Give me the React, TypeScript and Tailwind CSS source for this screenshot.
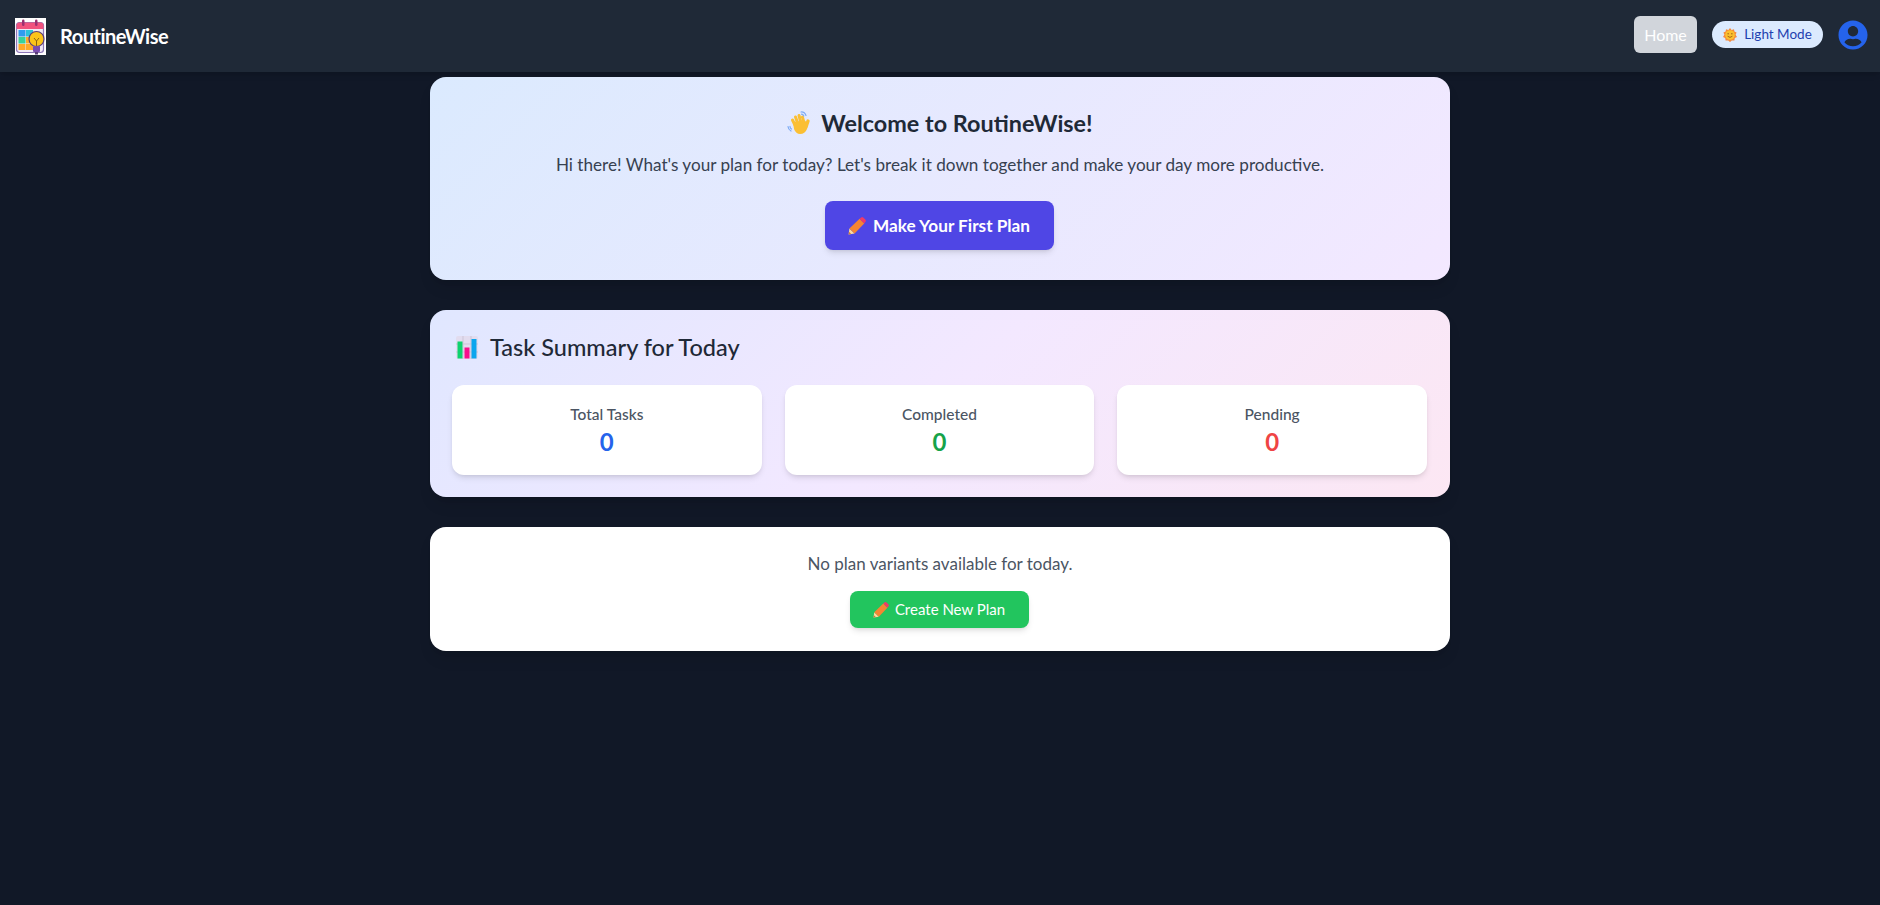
import { FaUserCircle } from 'react-icons/fa'

function PencilIcon({ size = 18 }: { size?: number }) {
  return (
    <svg width={size} height={size} viewBox="0 0 18 18" className="shrink-0">
      <path d="M0.6 17.4 L1.4 11.4 L6.6 16.6 Z" fill="#fcd9a0" />
      <path d="M0.6 17.4 L1 14.8 L3.2 17 Z" fill="#c97a3a" />
      <path d="M1.4 11.4 L11.6 1.8 L16.2 6.4 L6.6 16.6 Z" fill="#f58532" />
      <path d="M11.6 1.8 L13.2 0.4 Q14.2 -0.2 15.2 0.5 L17.5 2.8 Q18.2 3.8 17.5 4.8 L16.2 6.4 Z" fill="#ef3a68" />
    </svg>
  )
}

function WaveIcon() {
  return (
    <svg width="24" height="24" viewBox="0 0 24 24" className="shrink-0">
      <g fill="none" stroke="#fbbf33" strokeLinecap="round">
        <path d="M8 14 L5.5 9" strokeWidth="3" />
        <path d="M11 13 L8.5 6" strokeWidth="3" />
        <path d="M14 12 L12 4.5" strokeWidth="3" />
        <path d="M17 12 L15.5 6" strokeWidth="3" />
        <path d="M19 16 L21 10" strokeWidth="3.4" />
      </g>
      <path d="M6 11 L18 9.5 L20.5 13 L20 18 Q18 23 13 23 Q9 23 7 18 Z" fill="#fbbf33" />
      <path d="M14 1 Q17.5 0.6 19 4.5 M14.5 3.2 Q16 3.2 16.8 5 M1 15.5 Q1.2 18.5 4 20 M3 15.4 Q3 17 4.5 18" stroke="#7cabf5" strokeWidth="1.2" fill="none" strokeLinecap="round" />
    </svg>
  )
}

function ChartIcon() {
  return (
    <svg width="24" height="24" viewBox="0 0 24 24" className="shrink-0">
      <rect x="1" y="1" width="22" height="23" rx="2" fill="#e2dcef" />
      <path d="M8 1 V24 M16 1 V24 M1 9 H23 M1 17 H23" stroke="#cbc5d8" strokeWidth="1" />
      <rect x="2.5" y="6.5" width="5" height="17" fill="#0ed26f" />
      <rect x="9.5" y="12.5" width="5" height="11" fill="#f70f8c" />
      <rect x="16.5" y="4" width="5" height="19.5" fill="#0ba6ee" />
    </svg>
  )
}

function SunIcon() {
  return (
    <svg width="14" height="14" viewBox="0 0 14 14" className="shrink-0">
      <path d="M7 0 L8.6 2 L11 1.2 L11.4 3.6 L13.6 4.4 L12.6 6.8 L14 9 L11.8 10 L11.4 12.6 L8.8 12.4 L7 14 L5.2 12.4 L2.6 12.6 L2.2 10 L0 9 L1.4 6.8 L0.4 4.4 L2.6 3.6 L3 1.2 L5.4 2 Z" fill="#f58a3c" />
      <circle cx="7" cy="7" r="4.8" fill="#fbc02d" />
      <path d="M4.4 5.8 H6 M8 5.8 H9.6" stroke="#a5651a" strokeWidth="1" />
      <path d="M4.6 8.2 Q7 10.6 9.4 8.2" stroke="#a5651a" strokeWidth="1" fill="none" />
    </svg>
  )
}

function Logo() {
  return (
    <svg width="31" height="37" viewBox="0 0 31 37" className="shrink-0">
      <rect width="31" height="37" fill="#ffffff" />
      <rect x="1.5" y="4.5" width="27" height="30" rx="3" fill="#f1e9f5" stroke="#8d76b8" strokeWidth="1.2" />
      <path d="M1.5 11 V7.5 Q1.5 4.5 4.5 4.5 H25.5 Q28.5 4.5 28.5 7.5 V11 Z" fill="#f0527e" />
      <rect x="7" y="1.5" width="2.5" height="6.5" rx="1.2" fill="#9a2f6f" />
      <rect x="20" y="1.5" width="2.5" height="6.5" rx="1.2" fill="#9a2f6f" />
      <rect x="3.5" y="12" width="7" height="6.5" fill="#2f9bf0" />
      <rect x="11" y="12" width="7" height="6.5" fill="#2cc1d8" />
      <rect x="3.5" y="19" width="7" height="6.5" fill="#37d39a" />
      <rect x="11" y="19" width="7" height="6.5" fill="#ffa928" />
      <rect x="3.5" y="26" width="7" height="6" fill="#ffa928" />
      <rect x="11" y="26" width="7" height="6" fill="#ffa928" />
      <circle cx="21.5" cy="21" r="7.5" fill="#fcc419" stroke="#5a3d78" strokeWidth="1.2" />
      <path d="M19 20 L21.5 23 L24 20 M21.5 23 V28" stroke="#8a6212" strokeWidth="1" fill="none" />
      <rect x="18" y="28" width="7" height="6" rx="1" fill="#7b4cb0" />
      <rect x="20" y="34" width="3" height="2.5" fill="#5a3d78" />
    </svg>
  )
}

function StatCard({ label, color }: { label: string; color: string }) {
  return (
    <div className="flex h-[90px] flex-col items-center justify-center rounded-xl bg-white shadow-md">
      <p className="text-[15.5px] leading-6 font-medium text-[#4b5563]">{label}</p>
      <p className={`text-[24px] leading-8 font-bold ${color}`}>0</p>
    </div>
  )
}

export default function App() {
  return (
    <div className="min-h-[905px] bg-[#111827] font-['Lato',sans-serif]">
      <nav className="flex h-[72px] items-center justify-between bg-[#1f2937] pr-[12px] pl-[15px] shadow-md">
        <div className="flex items-center gap-[14px]">
          <Logo />
          <span className="text-[20px] font-bold tracking-[-0.5px] text-white">RoutineWise</span>
        </div>
        <div className="-mt-[3px] flex items-center">
          <button className="flex h-[37px] w-[63px] items-center justify-center rounded-md bg-[#d1d5db] text-[16px] text-white">Home</button>
          <button className="ml-[15px] flex h-[27px] w-[111px] items-center justify-center gap-[7px] rounded-full bg-[#dbeafe] text-[13.5px] text-[#1e40af]">
            <SunIcon />
            Light Mode
          </button>
          <FaUserCircle className="ml-[15px] text-[#2563eb]" size={30} />
        </div>
      </nav>

      <main className="mx-auto flex w-[1020px] flex-col gap-[30px] pt-[5px]">
        <section className="flex h-[203px] flex-col items-center rounded-2xl bg-linear-135 from-[#dbeafe] to-[#f3e8ff] pt-[30px] shadow-lg">
          <h1 className="flex items-center gap-[10px] text-[23.4px] leading-8 font-bold text-[#1f2937]">
            <WaveIcon />
            Welcome to RoutineWise!
          </h1>
          <p className="mt-[12px] text-[17.15px] leading-7 text-[#374151]">
            Hi there! What's your plan for today? Let's break it down together and make your day more productive.
          </p>
          <button className="mt-[22px] mr-[2px] flex h-[49px] w-[229px] items-center justify-center gap-[7px] rounded-lg bg-[#4f46e5] text-[17.2px] font-bold text-white shadow-md">
            <PencilIcon />
            Make Your First Plan
          </button>
        </section>

        <section className="flex h-[187px] flex-col rounded-2xl bg-linear-135 from-[#e0e7ff] via-[#f3e8ff] to-[#fce7f3] pt-[21px] pr-[23px] pl-[22px] shadow-lg">
          <h2 className="ml-[3px] flex items-center gap-[11px] text-[23.5px] leading-8 font-medium text-[#1f2937]">
            <ChartIcon />
            Task Summary for Today
          </h2>
          <div className="mt-[22px] grid grid-cols-3 gap-[23px]">
            <StatCard label="Total Tasks" color="text-[#2563eb]" />
            <StatCard label="Completed" color="text-[#16a34a]" />
            <StatCard label="Pending" color="text-[#ef4444]" />
          </div>
        </section>

        <section className="flex h-[124px] flex-col items-center rounded-2xl bg-white pt-[25px] shadow-lg">
          <p className="text-[17px] leading-6 text-[#4b5563]">No plan variants available for today.</p>
          <button className="mt-[15px] mr-[2px] flex h-[37px] w-[179px] items-center justify-center gap-[6px] rounded-lg bg-[#22c55e] text-[15px] text-white shadow-md">
            <PencilIcon size={16} />
            Create New Plan
          </button>
        </section>
      </main>
    </div>
  )
}
